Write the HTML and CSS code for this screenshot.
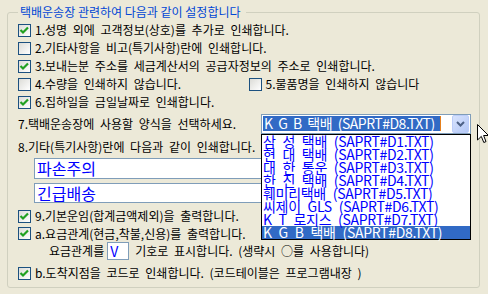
FILE: index.html
```html
<!DOCTYPE html>
<html>
<head>
    <title>택배운송장 설정</title>
    <link rel="stylesheet" href="styles.css">
</head>
<body>
    <fieldset class="group">
        <legend>택배운송장 관련하여 다음과 같이 설정합니다</legend>

        <div class="row"><span class="chk on"><svg viewBox="0 0 11 11"><path d="M1.5 5 L4 7.5 L9 2.5"/></svg></span>1.성명 외에 고객정보(상호)를 추가로 인쇄합니다.</div>
        <div class="row"><span class="chk"></span>2.기타사항을 비고(특기사항)란에 인쇄합니다.</div>
        <div class="row"><span class="chk on"><svg viewBox="0 0 11 11"><path d="M1.5 5 L4 7.5 L9 2.5"/></svg></span>3.보내는분 주소를 세금계산서의 공급자정보의 주소로 인쇄합니다.</div>
        <div class="row">
            <div class="half"><span class="chk"></span>4.수량을 인쇄하지 않습니다.</div>
            <div class="half"><span class="chk"></span>5.물품명을 인쇄하지 않습니다</div>
        </div>
        <div class="row"><span class="chk on"><svg viewBox="0 0 11 11"><path d="M1.5 5 L4 7.5 L9 2.5"/></svg></span>6.집하일을 금일날짜로 인쇄합니다.</div>

        <div class="row select-row">
            <span>7.택배운송장에 사용할 양식을 선택하세요.</span>
            <div class="combo">
                <span class="combo-value">K G B 택배 (SAPRT#D8.TXT)</span>
                <span class="caret"></span>
                <span class="combo-btn"><svg viewBox="0 0 15 16"><path d="M4 6 L7.5 9.5 L11 6"/></svg></span>
                <ul class="combo-list">
                    <li>삼 성 택배 (SAPRT#D1.TXT)</li>
                    <li>현 대 택배 (SAPRT#D2.TXT)</li>
                    <li>대 한 통운 (SAPRT#D3.TXT)</li>
                    <li>한 진 택배 (SAPRT#D4.TXT)</li>
                    <li>훼미리택배 (SAPRT#D5.TXT)</li>
                    <li>씨제이 GLS (SAPRT#D6.TXT)</li>
                    <li>K T 로지스 (SAPRT#D7.TXT)</li>
                    <li class="selected">K G B 택배 (SAPRT#D8.TXT)</li>
                </ul>
            </div>
        </div>

        <div class="row memo-label">8.기타(특기사항)란에 다음과 같이 인쇄합니다.</div>
        <div class="memo">파손주의</div>
        <div class="memo second">긴급배송</div>

        <div class="row row-9"><span class="chk on"><svg viewBox="0 0 11 11"><path d="M1.5 5 L4 7.5 L9 2.5"/></svg></span>9.기본운임(합계금액제외)을 출력합니다.</div>
        <div class="row row-a"><span class="chk on"><svg viewBox="0 0 11 11"><path d="M1.5 5 L4 7.5 L9 2.5"/></svg></span>a.요금관계(현금,착불,신용)를 출력합니다.</div>
        <div class="row sub-row">요금관계를<span class="mark">V</span>기호로 표시합니다. (생략시 ○를 사용합니다)</div>
        <div class="row row-b"><span class="chk on"><svg viewBox="0 0 11 11"><path d="M1.5 5 L4 7.5 L9 2.5"/></svg></span>b.도착지점을 코드로 인쇄합니다. (코드테이블은 프로그램내장 )</div>
    </fieldset>

    <svg class="pointer" width="12" height="20" viewBox="0 0 12 20"><path d="M0.5 0.5 L0.5 16 L4.3 12.4 L6.8 18.5 L9 17.6 L6.6 11.5 L11.5 11.5 Z"/></svg>
</body>
</html>
```

FILE: styles.css
```css
body {
    margin: 0;
    width: 488px;
    height: 294px;
    overflow: hidden;
    position: relative;
    background-color: #ece9d8;
    font-family: "Noto Sans CJK KR", sans-serif;
    font-size: 12px;
    word-spacing: 3px;
    color: #000;
}

.group {
    margin: 4px 8px 0 7px;
    padding: 1px 0 5px 10px;
    border: 1px solid #d0d0bf;
    border-radius: 3px;
    min-width: 0;
}

.group legend {
    color: #0046d5;
    padding: 0 5px 0 2px;
    line-height: 16px;
    word-spacing: 0;
}

.row {
    display: flex;
    align-items: center;
    height: 18px;
    line-height: 18px;
    white-space: nowrap;
}

.half {
    display: flex;
    align-items: center;
    width: 232px;
}

.chk {
    flex: none;
    width: 11px;
    height: 11px;
    margin-right: 4px;
    border: 1px solid #1c5180;
    background: linear-gradient(135deg, #dcdcd7, #ffffff);
}

.chk svg {
    display: block;
    width: 11px;
    height: 11px;
}

.chk svg path {
    fill: none;
    stroke: #21a121;
    stroke-width: 2.2;
}

/* combo box */
.select-row {
    justify-content: space-between;
    height: 20px;
    margin-top: 3px;
}

.combo {
    position: relative;
    flex: none;
    width: 208px;
    height: 18px;
    margin-right: 8px;
    border: 1px solid #7f9db9;
    background-color: #fff;
    font-size: 14px;
    letter-spacing: -0.3px;
    word-spacing: 4px;
}

.combo-value {
    position: absolute;
    left: 1px;
    top: 1px;
    width: 176px;
    height: 15px;
    padding-left: 1px;
    background-color: #316ac5;
    color: #fff;
    line-height: 15px;
    letter-spacing: -0.5px;
    word-spacing: 3px;
}

.caret {
    position: absolute;
    left: 178px;
    top: 1px;
    width: 1px;
    height: 15px;
    background-color: #e5801d;
}

.combo-btn {
    position: absolute;
    right: 1px;
    top: 0;
    width: 15px;
    height: 16px;
    border: 1px solid #bccdf9;
    border-radius: 2px;
    background: linear-gradient(135deg, #d8e3fd, #b4c8f6);
}

.combo-btn svg {
    display: block;
    width: 15px;
    height: 16px;
}

.combo-btn svg path {
    fill: none;
    stroke: #4d6185;
    stroke-width: 2;
}

.combo-list {
    position: absolute;
    left: -1px;
    top: 19px;
    width: 208px;
    margin: 0;
    padding: 0;
    list-style: none;
    border: 1px solid #000;
    background-color: #fff;
    z-index: 2;
}

.combo-list li {
    height: 13px;
    padding-left: 1px;
    color: #0000ff;
    line-height: 13px;
}

.combo-list li.selected {
    background-color: #316ac5;
    color: #fff;
}

/* memo lines */
.memo-label {
    height: 20px;
    margin-top: 3px;
}

.memo {
    height: 19px;
    margin: 1px 8px 0 16px;
    padding-left: 2px;
    border: 1px solid #7f9db9;
    background-color: #fff;
    color: #0000ff;
    font-size: 16px;
    line-height: 19px;
}

.memo.second {
    height: 18px;
    margin-top: 4px;
    line-height: 18px;
}

.row-9 {
    margin-top: 4px;
}

.row-a {
    height: 17px;
}

.sub-row {
    padding-left: 31px;
}

.mark {
    width: 18px;
    height: 16px;
    margin: 0 6px 0 3px;
    padding-left: 2px;
    border: 1px solid #7f9db9;
    background-color: #fff;
    color: #0000ff;
    font-size: 14px;
    line-height: 16px;
}

.row-b {
    margin-top: 4px;
}

.pointer {
    position: absolute;
    left: 477px;
    top: 124px;
}

.pointer path {
    fill: #fff;
    stroke: #000;
    stroke-width: 1;
}
```
